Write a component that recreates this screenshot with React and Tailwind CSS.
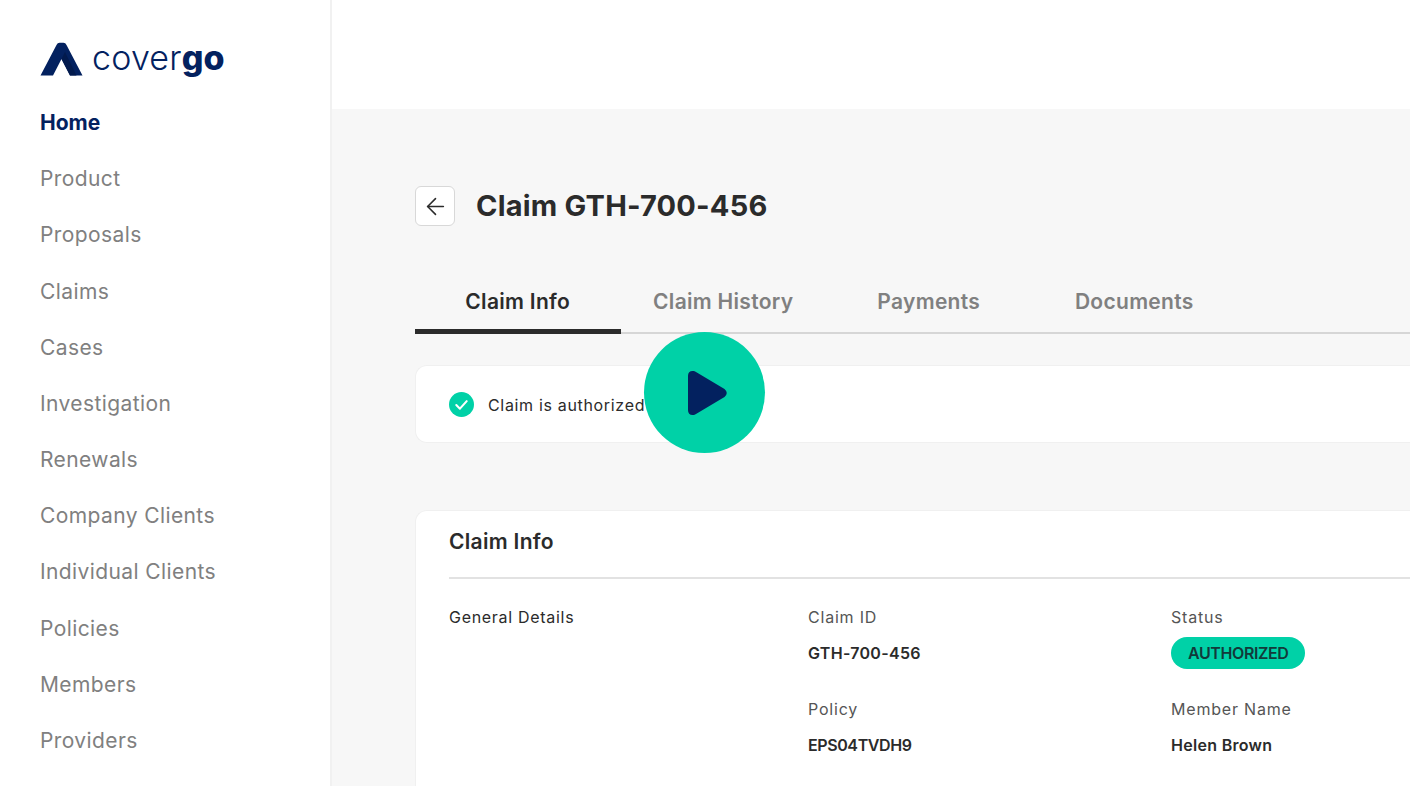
import React from "react";
import { ArrowLeft } from "lucide-react";

const navItems = [
  "Product",
  "Proposals",
  "Claims",
  "Cases",
  "Investigation",
  "Renewals",
  "Company Clients",
  "Individual Clients",
  "Policies",
  "Members",
  "Providers",
];

const tabs = ["Claim History", "Payments", "Documents"];

function Logo() {
  return (
    <div className="flex items-center gap-[9px] h-[34px]">
      <svg width="43" height="34" viewBox="0 0 42 34">
        <path d="M0 33.5 L16 3 Q17 0.8 19 0.8 L23 0.8 Q25 0.8 26 3 L42 33.5 L29.5 33.5 L21 17 L12.5 33.5 Z" fill="#03215f" />
        <path d="M21 17 L24.5 10 L36 33.5 L29.5 33.5 Z" fill="#021a4d" />
      </svg>
      <span className="text-[34px] leading-none text-[#03215f] font-light tracking-[0.2px] -mt-[2px]">
        cover<span className="font-extrabold">go</span>
      </span>
    </div>
  );
}

function Field({ label, children }) {
  return (
    <div className="h-[92px]">
      <div className="text-[16px] leading-[24px] text-[#555555] tracking-[0.8px]">{label}</div>
      <div className="mt-[8px] h-[32px] flex items-center text-[16px] font-semibold text-[#2b2b2b] tracking-[0.3px]">
        {children}
      </div>
    </div>
  );
}

export default function App() {
  return (
    <div className="relative flex w-[1410px] h-[786px] overflow-hidden bg-white font-['Inter',sans-serif]">
      <aside className="w-[332px] shrink-0 border-r-2 border-[#f1f1f1] pl-[40px] pt-[42px]">
        <Logo />
        <nav className="mt-[18.6px] flex flex-col">
          <div className="h-[56.2px] flex items-center text-[21px] font-bold text-[#03215f]">Home</div>
          {navItems.map((item) => (
            <div key={item} className="h-[56.2px] flex items-center text-[21px] text-[#808080] tracking-[0.4px]">
              {item}
            </div>
          ))}
        </nav>
      </aside>

      <div className="flex-1 min-w-0 flex flex-col">
        <header className="h-[109px] shrink-0 bg-white" />
        <main className="flex-1 bg-[#f7f7f7] pl-[83px] pt-[77px]">
          <div className="flex items-center gap-[21px]">
            <button className="w-[40px] h-[40px] flex items-center justify-center rounded-[6px] border border-[#d8d8d8] bg-white text-[#2b2b2b]">
              <ArrowLeft size={27} strokeWidth={1.4} />
            </button>
            <h1 className="text-[29px] leading-[40px] font-bold text-[#2b2b2b] tracking-[0.2px]">Claim GTH-700-456</h1>
          </div>

          <div className="mt-[50px] flex h-[58px] border-b-2 border-[#d6d6d6]">
            <div className="w-[205.5px] h-[58px] flex items-center justify-center pb-[2px] border-b-[5px] border-[#2b2b2b] text-[21px] font-semibold text-[#2b2b2b] tracking-[0.3px]">
              Claim Info
            </div>
            {tabs.map((tab) => (
              <div key={tab} className="w-[205.5px] pb-[5px] flex items-center justify-center text-[21px] font-semibold text-[#808080] tracking-[0.3px]">
                {tab}
              </div>
            ))}
          </div>

          <div className="mt-[31px] h-[78px] flex items-center gap-[14px] pl-[33px] bg-white border border-[#f0f0f0] border-r-0 rounded-l-[12px]">
            <svg width="25" height="25" viewBox="0 0 24 24">
              <circle cx="12" cy="12" r="12" fill="#00d1a7" />
              <path d="M7 12.5 L10.5 16 L17 8.8" fill="none" stroke="#ffffff" strokeWidth="2" strokeLinecap="round" strokeLinejoin="round" />
            </svg>
            <span className="text-[16px] text-[#2b2b2b] tracking-[0.67px] mt-[2px]">Claim is authorized</span>
          </div>

          <div className="mt-[67px] h-[300px] pl-[33px] bg-white border border-[#f0f0f0] border-r-0 rounded-l-[12px]">
            <div className="h-[68px] pb-[4px] flex items-center border-b-2 border-[#e2e2e2] text-[21px] font-semibold text-[#2b2b2b] tracking-[0.3px]">
              Claim Info
            </div>
            <div className="pt-[26px] flex">
              <div className="w-[359px] text-[16px] leading-[24px] text-[#2b2b2b] tracking-[0.7px]">General Details</div>
              <div className="w-[363px]">
                <Field label="Claim ID">GTH-700-456</Field>
                <Field label="Policy">
                  <span className="tracking-[-0.4px]">EPS04TVDH9</span>
                </Field>
              </div>
              <div>
                <Field label="Status">
                  <span className="h-[32px] px-[17px] flex items-center rounded-full bg-[#00d1a7] text-[#123a3a] font-semibold tracking-[-0.4px]">
                    AUTHORIZED
                  </span>
                </Field>
                <Field label="Member Name">Helen Brown</Field>
              </div>
            </div>
          </div>
        </main>
      </div>

      {/* play button over the video still */}
      <div className="absolute left-[644px] top-[332px] w-[121px] h-[121px] rounded-full bg-[#00d1a7] flex items-center justify-center">
        <svg width="42" height="46" viewBox="0 0 42 46" className="ml-[6px]">
          <path d="M1 6 Q1 0.5 6.5 1 Q7.5 1 9 2 L37.5 19 Q42 23 37.5 27 L9 44 Q7.5 45 6.5 45 Q1 45.5 1 40 Z" fill="#03215f" />
        </svg>
      </div>
    </div>
  );
}
